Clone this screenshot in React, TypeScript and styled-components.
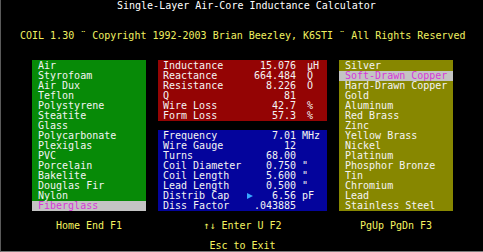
import styled, { createGlobalStyle } from "styled-components";

const Global = createGlobalStyle`
    html, body { margin: 0; padding: 0; background: #000; }
`

const Screen = styled.div`
    width: 483px;
    height: 252px;
    box-sizing: border-box;
    padding-top: 1px;
    background: #000;
    border-left: 1px solid #5a5a5a;
    border-bottom: 1px solid #7a7a7a;
    font-family: "DejaVu Sans Mono", "Liberation Mono", monospace;
    font-size: 10px;
    line-height: 10px;
    white-space: pre;
    display: flex;
    flex-direction: column;
    overflow: hidden;
`

const Line = styled.div<{ $indent: number; $color: string; $top: number }>`
    height: 10px;
    margin-top: ${p => p.$top}px;
    padding-left: ${p => p.$indent}px;
    color: ${p => p.$color};
`

const Columns = styled.div<{ $top: number }>`
    display: grid;
    grid-template-columns: 114px 169px 114px;
    column-gap: 12px;
    padding-left: 31px;
    margin-top: ${p => p.$top}px;
`

const List = styled.div<{ $bg: string }>`
    height: 150px;
    margin-top: -1px;
    padding-top: 1px;
    background: ${p => p.$bg};
    display: flex;
    flex-direction: column;
`

const ListItem = styled.div<{ $selected?: boolean }>`
    height: 10px;
    padding-left: 6px;
    color: ${p => (p.$selected ? "#d838d8" : "#f4f4f4")};
    background: ${p => (p.$selected ? "#c4c4c4" : "transparent")};
`

const Middle = styled.div`
    display: flex;
    flex-direction: column;
    justify-content: space-between;
    height: 151px;
    margin-top: -1px;
`

const Panel = styled.div<{ $bg: string; $rows: number }>`
    height: ${p => p.$rows * 10}px;
    padding-top: 1px;
    background: ${p => p.$bg};
    color: #f4f4f4;
`

const DataRow = styled.div`
    display: grid;
    grid-template-columns: 84px 7px 42px 31px;
    height: 10px;
    padding-left: 5px;
`

const Value = styled.span`
    text-align: right;
`

const Unit = styled.span<{ $pad: number }>`
    padding-left: ${p => p.$pad}px;
`

const Marker = styled.span`
    display: flex;
    align-items: center;
    height: 10px;
`

const Keys = styled.div`
    height: 10px;
    text-align: center;
    color: #f4f460;
`

const Cursor = () => (
    <svg width="6" height="6" viewBox="0 0 6 6">
        <polygon points="0,0 6,3 0,6" fill="#38a8ff" />
    </svg>
)

const dielectrics = [
    "Air", "Styrofoam", "Air Dux", "Teflon", "Polystyrene", "Steatite", "Glass",
    "Polycarbonate", "Plexiglas", "PVC", "Porcelain", "Bakelite", "Douglas Fir",
    "Nylon", "Fiberglass",
]

const metals = [
    "Silver", "Soft-Drawn Copper", "Hard-Drawn Copper", "Gold", "Aluminum",
    "Red Brass", "Zinc", "Yellow Brass", "Nickel", "Platinum", "Phosphor Bronze",
    "Tin", "Chromium", "Lead", "Stainless Steel",
]

const results = [
    ["Inductance", "15.076", "µH"],
    ["Reactance", "664.484", "Ô"],
    ["Resistance", "8.226", "Ô"],
    ["Q", "81", ""],
    ["Wire Loss", "42.7", "%"],
    ["Form Loss", "57.3", "%"],
]

const inputs = [
    ["Frequency", "7.01", "MHz"],
    ["Wire Gauge", "12", ""],
    ["Turns", "68.00", ""],
    ["Coil Diameter", "0.750", "\""],
    ["Coil Length", "5.600", "\""],
    ["Lead Length", "0.500", "\""],
    ["Distrib Cap", "6.56", "pF"],
    ["Diss Factor", ".043885", ""],
]

const App = () => {
    return <Screen>
        <Global />
        <Line $indent={116} $color="#ffffff" $top={0}>Single-Layer Air-Core Inductance Calculator</Line>
        <Line $indent={19} $color="#f0f060" $top={20}>COIL 1.30 ¨ Copyright 1992-2003 Brian Beezley, K6STI ¨ All Rights Reserved</Line>
        <Columns $top={20}>
            <List $bg="#078a07">
                {dielectrics.map(d => <ListItem key={d} $selected={d === "Fiberglass"}>{d}</ListItem>)}
            </List>
            <Middle>
                <Panel $bg="#940404" $rows={6}>
                    {results.map(([label, value, unit]) => <DataRow key={label}>
                        <span>{label}</span><span />
                        <Value>{value}</Value>
                        <Unit $pad={11}>{unit}</Unit>
                    </DataRow>)}
                </Panel>
                <Panel $bg="#04049c" $rows={8}>
                    {inputs.map(([label, value, unit]) => <DataRow key={label}>
                        <span>{label}</span>
                        <Marker>{label === "Distrib Cap" && <Cursor />}</Marker>
                        <Value>{value}</Value>
                        <Unit $pad={6}>{unit}</Unit>
                    </DataRow>)}
                </Panel>
            </Middle>
            <List $bg="#878700">
                {metals.map(m => <ListItem key={m} $selected={m === "Soft-Drawn Copper"}>{m}</ListItem>)}
            </List>
        </Columns>
        <Columns $top={10}>
            <Keys>Home End F1</Keys>
            <Keys>↑↓ Enter U F2</Keys>
            <Keys>PgUp PgDn F3</Keys>
        </Columns>
        <Columns $top={10}>
            <span />
            <Keys>Esc to Exit</Keys>
            <span />
        </Columns>
    </Screen>
}

export default App
